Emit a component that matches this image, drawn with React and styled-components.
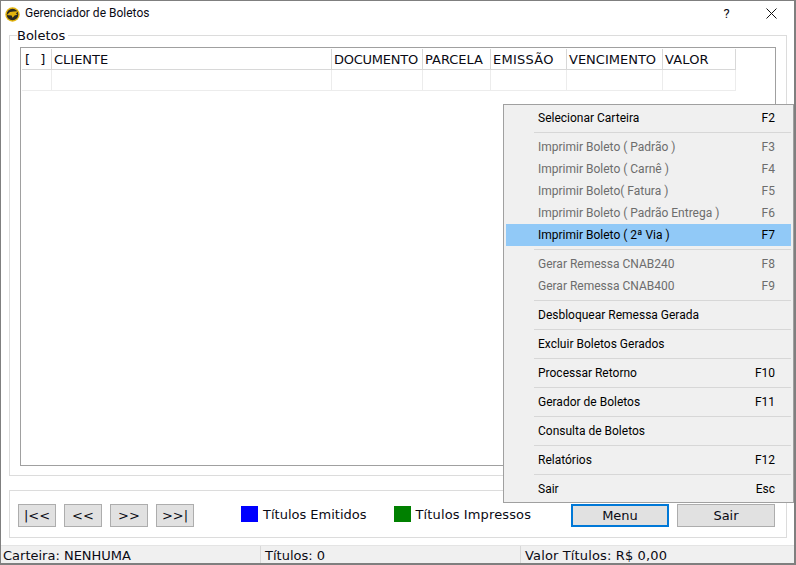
import React from "react";
import styled, { createGlobalStyle } from "styled-components";

const Global = createGlobalStyle`
  html, body { margin: 0; padding: 0; background: #fff; }
  #root { width: 796px; height: 565px; }
  * { box-sizing: border-box; }
`;

const Win = styled.div`
  position: relative;
  width: 796px;
  height: 565px;
  background: #fff;
  border: 1px solid #7f7f7f;
  border-right-width: 2px;
  border-bottom-width: 2px;
  display: flex;
  flex-direction: column;
  overflow: hidden;
  font-family: "DejaVu Sans", Verdana, sans-serif;
  color: #0a0a14;
`;

const TitleBar = styled.div`
  height: 26px;
  flex: none;
  display: flex;
  align-items: center;
  padding-left: 4px;
  font-family: Roboto, "Noto Sans", sans-serif;
  font-size: 12px;
`;
const TitleText = styled.span`
  margin-left: 5px;
  flex: 1;
  position: relative;
  top: -1px;
`;
const TitleBtn = styled.div`
  width: 45px;
  height: 26px;
  display: flex;
  align-items: center;
  justify-content: center;
  font-size: 13px;
  padding-bottom: 2px;
`;

const Body = styled.div`
  flex: 1;
  display: flex;
  flex-direction: column;
  padding: 8px 7px 0 8px;
`;

const GroupBox = styled.div`
  position: relative;
  height: 441px;
  border: 1px solid #dcdcdc;
  padding: 11px 10px 9px 10px;
`;
const GroupLabel = styled.span`
  position: absolute;
  left: 7px;
  top: -8px;
  padding-right: 3px;
  background: #fff;
  font-size: 13px;
  line-height: 15px;
`;
const Grid = styled.div`
  height: 100%;
  border: 1px solid #a0a0a0;
  padding: 1px 0 0 1px;
`;
const Row = styled.div`
  display: flex;
  height: 21px;
  border-bottom: 1px solid ${(p) => (p.$head ? "#d8d8d8" : "#ececec")};
  width: 714px;
`;
const Cell = styled.div`
  flex: none;
  width: ${(p) => p.$w}px;
  border-right: 1px solid ${(p) => (p.$head ? "#d8d8d8" : "#ececec")};
  font-size: 13px;
  line-height: 21px;
  padding-left: ${(p) => p.$pl ?? 2}px;
  letter-spacing: ${(p) => p.$ls || 0}px;
  white-space: pre;
  overflow: hidden;
`;

const BottomBox = styled.div`
  margin-top: 14px;
  height: 48px;
  border: 1px solid #dcdcdc;
  display: flex;
  align-items: center;
  padding: 0 11px 0 8px;
`;
const NavGroup = styled.div`
  display: flex;
  gap: 8px;
  margin-top: 2px;
`;
const Btn = styled.div`
  width: ${(p) => p.$w || 38}px;
  height: 23px;
  background: #e1e1e1;
  border: 1px solid #adadad;
  display: flex;
  align-items: center;
  justify-content: center;
  font-size: 13px;
`;
const DefaultBtn = styled(Btn)`
  border: 2px solid #0078d7;
`;
const Legend = styled.div`
  display: flex;
  align-items: center;
  font-size: 13px;
  letter-spacing: ${(p) => p.$ls || 0}px;
  margin-left: ${(p) => p.$ml}px;
  gap: 5px;
`;
const Swatch = styled.div`
  width: 17px;
  height: 16px;
  background: ${(p) => p.$c};
`;
const ActionGroup = styled.div`
  margin-left: auto;
  display: flex;
  gap: 8px;
  margin-top: 2px;
`;

const StatusBar = styled.div`
  margin: 7px -7px 0 -8px;
  height: 19px;
  background: #f0f0f0;
  border-top: 1px solid #e4e4e4;
  display: flex;
  font-size: 13px;
  line-height: 19px;
`;
const StatusCell = styled.div`
  width: ${(p) => p.$w}px;
  padding-left: ${(p) => p.$pl}px;
  letter-spacing: ${(p) => p.$ls || 0}px;
  border-right: 1px solid ${(p) => (p.$last ? "transparent" : "#d8d8d8")};
`;

const Menu = styled.div`
  position: absolute;
  left: 502px;
  top: 103px;
  width: 291px;
  height: 399px;
  background: #f0f0f0;
  border: 1px solid #a0a0a0;
  padding: 2px;
  font-family: Roboto, "Noto Sans", sans-serif;
  font-size: 12px;
`;
const MenuItem = styled.div`
  height: 22px;
  display: flex;
  align-items: center;
  justify-content: space-between;
  padding: 0 16px 1px 32px;
  color: ${(p) => (p.$off ? "#6d6d6d" : "#000")};
  background: ${(p) => (p.$on ? "#91c9f7" : "transparent")};
`;
const MenuSep = styled.div`
  height: 7px;
  padding: 3px 0 3px 28px;
  &::after {
    content: "";
    display: block;
    height: 1px;
    background: #d7d7d7;
  }
`;

const Logo = () => (
  <svg width="15" height="15" viewBox="0 0 15 15">
    <circle cx="7.5" cy="7.5" r="7.2" fill="#e3b40e" />
    <circle cx="7.5" cy="7.5" r="5.8" fill="#2b2a22" />
    <path d="M1.8 8 L5 5 L8.5 4.4 L13.2 4.2 L10.8 6.4 L12.6 7.6 L9.6 8.4 L7.6 10.8 L6.6 8.6 L3.8 8.2 Z" fill="#e3b40e" />
  </svg>
);

const CloseIcon = () => (
  <svg width="11" height="11" viewBox="0 0 11 11">
    <path d="M0.5 0.5 L10.5 10.5 M10.5 0.5 L0.5 10.5" stroke="#111" strokeWidth="1" fill="none" />
  </svg>
);

const cols = [
  { t: "[  ]", w: 30, pl: 3, ls: 0.6 },
  { t: "CLIENTE", w: 280 },
  { t: "DOCUMENTO", w: 91, ls: -0.25 },
  { t: "PARCELA", w: 68 },
  { t: "EMISSÃO", w: 76, ls: 0.25 },
  { t: "VENCIMENTO", w: 96 },
  { t: "VALOR", w: 73, ls: 0.15 },
];

const menu = [
  ["Selecionar Carteira", "F2"],
  "-",
  ["Imprimir Boleto ( Padrão )", "F3", "off"],
  ["Imprimir Boleto ( Carnê )", "F4", "off"],
  ["Imprimir Boleto( Fatura )", "F5", "off"],
  ["Imprimir Boleto ( Padrão Entrega )", "F6", "off"],
  ["Imprimir Boleto ( 2ª Via )", "F7", "on"],
  "-",
  ["Gerar Remessa CNAB240", "F8", "off"],
  ["Gerar Remessa CNAB400", "F9", "off"],
  "-",
  ["Desbloquear Remessa Gerada", ""],
  "-",
  ["Excluir Boletos Gerados", ""],
  "-",
  ["Processar Retorno", "F10"],
  "-",
  ["Gerador de Boletos", "F11"],
  "-",
  ["Consulta de Boletos", ""],
  "-",
  ["Relatórios", "F12"],
  "-",
  ["Sair", "Esc"],
];

export default function App() {
  return (
    <>
      <Global />
      <Win>
        <TitleBar>
          <Logo />
          <TitleText>Gerenciador de Boletos</TitleText>
          <TitleBtn>?</TitleBtn>
          <TitleBtn><CloseIcon /></TitleBtn>
        </TitleBar>
        <Body>
          <GroupBox>
            <GroupLabel>Boletos</GroupLabel>
            <Grid>
              <Row $head>
                {cols.map((c) => (
                  <Cell key={c.t} $head $w={c.w} $pl={c.pl} $ls={c.ls}>{c.t}</Cell>
                ))}
              </Row>
              <Row>
                {cols.map((c) => (
                  <Cell key={c.t} $w={c.w} />
                ))}
              </Row>
            </Grid>
          </GroupBox>
          <BottomBox>
            <NavGroup>
              <Btn>|&lt;&lt;</Btn>
              <Btn>&lt;&lt;</Btn>
              <Btn>&gt;&gt;</Btn>
              <Btn>&gt;&gt;|</Btn>
            </NavGroup>
            <Legend $ml={47}><Swatch $c="#0000ff" />Títulos Emitidos</Legend>
            <Legend $ml={27} $ls={0.12}><Swatch $c="#008000" />Títulos Impressos</Legend>
            <ActionGroup>
              <DefaultBtn $w={98}>Menu</DefaultBtn>
              <Btn $w={98}>Sair</Btn>
            </ActionGroup>
          </BottomBox>
          <StatusBar>
            <StatusCell $w={260} $pl={2}>Carteira: NENHUMA</StatusCell>
            <StatusCell $w={260} $pl={4}>Títulos: 0</StatusCell>
            <StatusCell $w={273} $pl={4} $ls={0.14} $last>Valor Títulos: R$ 0,00</StatusCell>
          </StatusBar>
        </Body>
        <Menu>
          {menu.map((m, i) =>
            m === "-" ? (
              <MenuSep key={i} />
            ) : (
              <MenuItem key={i} $off={m[2] === "off"} $on={m[2] === "on"}>
                <span>{m[0]}</span>
                <span>{m[1]}</span>
              </MenuItem>
            )
          )}
        </Menu>
      </Win>
    </>
  );
}
